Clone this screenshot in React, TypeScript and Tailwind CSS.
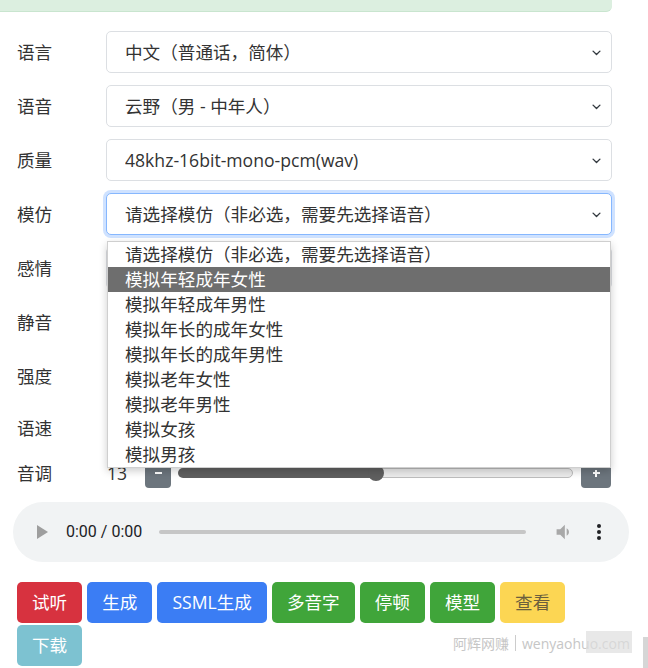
import type { ReactNode } from 'react'

const FONT = "font-['Open_Sans','Noto_Sans_CJK_SC',sans-serif]"

const IMITATE_OPTIONS = [
  '请选择模仿（非必选，需要先选择语音）',
  '模拟年轻成年女性',
  '模拟年轻成年男性',
  '模拟年长的成年女性',
  '模拟年长的成年男性',
  '模拟老年女性',
  '模拟老年男性',
  '模拟女孩',
  '模拟男孩',
]

const ACTIONS = [
  { label: '试听', className: 'bg-[#d7323f] text-white' },
  { label: '生成', className: 'bg-[#3b7df4] text-white' },
  { label: 'SSML生成', className: 'bg-[#3b7df4] text-white' },
  { label: '多音字', className: 'bg-[#40a53a] text-white' },
  { label: '停顿', className: 'bg-[#40a53a] text-white' },
  { label: '模型', className: 'bg-[#40a53a] text-white' },
  { label: '查看', className: 'bg-[#fcd653] text-[#6b5f3e]' },
  { label: '下载', className: 'bg-[#7dc2d1] text-white' },
]

function Chevron() {
  return (
    <svg width="11" height="11" viewBox="0 0 16 16" fill="none">
      <path d="M3 6l5 5 5-5" stroke="#343a40" strokeWidth="2" strokeLinecap="round" strokeLinejoin="round" />
    </svg>
  )
}

function Select({ value, focused, children }: { value?: string; focused?: boolean; children?: ReactNode }) {
  return (
    <div className="relative flex-1">
      <div
        className={`flex h-[42px] items-center justify-between rounded-[5px] border bg-white pl-[18px] pr-[9px] ${
          focused ? 'border-[#86b7fe] shadow-[0_0_0_3px_rgba(13,110,253,0.2)]' : 'border-[#dcdfe3]'
        }`}
      >
        <span className="truncate">{value}</span>
        <Chevron />
      </div>
      {children}
    </div>
  )
}

// step buttons on either side of the range track
function StepButton({ plus }: { plus?: boolean }) {
  return (
    <button
      aria-label={plus ? 'increase' : 'decrease'}
      className={`relative flex h-[30px] items-center justify-center rounded-[4px] bg-[#6c757d] ${plus ? 'w-[30px]' : 'w-[26px]'}`}
    >
      <span className="h-[1.5px] w-[7px] bg-white" />
      {plus && <span className="absolute h-[7px] w-[1.5px] bg-white" />}
    </button>
  )
}

function Slider({ value, ratio }: { value?: number; ratio: number }) {
  return (
    <div className="mr-[1px] flex flex-1 items-center pl-[1px]">
      <span className="w-[38px]">{value}</span>
      <StepButton />
      <div className="relative ml-[7px] mr-[8px] flex h-[10px] flex-1">
        <div className="h-full rounded-l-full bg-[#5f5f5f]" style={{ width: `${ratio * 100}%` }} />
        <div className="h-full flex-1 rounded-r-full border border-[#bdbdbd] bg-[#ececec]" />
        <div
          className="absolute top-1/2 h-[16px] w-[16px] -translate-x-1/2 -translate-y-1/2 rounded-full bg-[#5f5f5f]"
          style={{ left: `${ratio * 100}%` }}
        />
      </div>
      <StepButton plus />
    </div>
  )
}

function Row({ label, className, children }: { label: string; className: string; children: ReactNode }) {
  return (
    <div className={`flex items-center ${className}`}>
      <span className="w-[106px] shrink-0 pl-[17px]">{label}</span>
      {children}
    </div>
  )
}

function AudioBar() {
  return (
    <div className="ml-[13px] mt-[9px] flex h-[60px] w-[616px] items-center rounded-full bg-[#f1f3f4] pl-[22px] pr-[27px]">
      <svg width="14" height="16" viewBox="6 4 14 16">
        <path d="M8 5v14l11-7z" fill="#9e9e9e" />
      </svg>
      <span className="ml-[17px] font-['Roboto',sans-serif] text-[16px] text-[#202124]">0:00 / 0:00</span>
      <div className="ml-[17px] h-[4px] flex-1 rounded-full bg-[#c6c6c6]" />
      <svg className="ml-[26px]" width="22" height="22" viewBox="0 0 24 24">
        <path
          d="M18.5 12c0-1.77-1.02-3.29-2.5-4.03v8.05c1.48-.73 2.5-2.25 2.5-4.02zM5 9v6h4l5 5V4L9 9H5z"
          fill="#a8a8a8"
        />
      </svg>
      <svg className="ml-[22px]" width="6" height="18" viewBox="0 0 6 18">
        <circle cx="3" cy="3" r="2" fill="#202124" />
        <circle cx="3" cy="9" r="2" fill="#202124" />
        <circle cx="3" cy="15" r="2" fill="#202124" />
      </svg>
    </div>
  )
}

export default function App() {
  return (
    <div className={`relative h-[668px] w-[648px] overflow-hidden bg-white text-[17.6px] text-[#333] ${FONT}`}>
      <div className="h-[12px] w-[612px] rounded-br-[6px] border-b border-[#c9e5cf] bg-[#dcefe0]" />

      <div className="mt-[13px] w-[612px]">
        <Row label="语言" className="h-[54px]">
          <Select value="中文（普通话，简体）" />
        </Row>
        <Row label="语音" className="h-[54px]">
          <Select value="云野（男 - 中年人）" />
        </Row>
        <Row label="质量" className="h-[54px]">
          <Select value="48khz-16bit-mono-pcm(wav)" />
        </Row>
        <Row label="模仿" className="relative z-10 h-[54px]">
          <Select value="请选择模仿（非必选，需要先选择语音）" focused>
            <ul className="absolute left-[1px] right-[1px] top-[48px] border border-[#cfcfcf] bg-white shadow-[0_3px_8px_rgba(0,0,0,0.2)]">
              {IMITATE_OPTIONS.map((opt, i) => (
                <li
                  key={opt}
                  className={`h-[25px] pl-[17px] leading-[25px] ${i === 1 ? 'bg-[#6e6e6e] text-white' : ''}`}
                >
                  {opt}
                </li>
              ))}
            </ul>
          </Select>
        </Row>
        <Row label="感情" className="h-[54px]">
          <Select />
        </Row>
        <Row label="静音" className="h-[54px]">
          <Slider ratio={0} />
        </Row>
        <Row label="强度" className="h-[54px]">
          <Slider ratio={0.5} />
        </Row>
        <Row label="语速" className="h-[50px]">
          <Slider ratio={0.5} />
        </Row>
        <Row label="音调" className="h-[40px]">
          <Slider value={13} ratio={0.5} />
        </Row>
      </div>

      <AudioBar />

      <div className="mt-[20px] flex w-[612px] flex-wrap gap-x-[5px] gap-y-[2px] pl-[17px]">
        {ACTIONS.map((a) => (
          <button key={a.label} className={`h-[41px] rounded-[5px] px-[15px] ${a.className}`}>
            {a.label}
          </button>
        ))}
      </div>

      {/* site watermark in the corner */}
      <div className="absolute left-[453px] top-[633px] flex h-[20px] items-center text-[14px] text-[#c6c6c6]">
        <span>阿辉网赚</span>
        <span className="mx-[6px] h-[16px] w-px bg-[#cccccc]" />
        <span className="relative">
          wenyaohuo.com
          <span className="absolute right-[-2px] top-[-2px] h-[22px] w-[46px] bg-[#dedede]/70" />
        </span>
      </div>
      <div className="absolute right-0 top-[637px] h-[31px] w-[5px] bg-[#d6d6d6]" />
    </div>
  )
}
